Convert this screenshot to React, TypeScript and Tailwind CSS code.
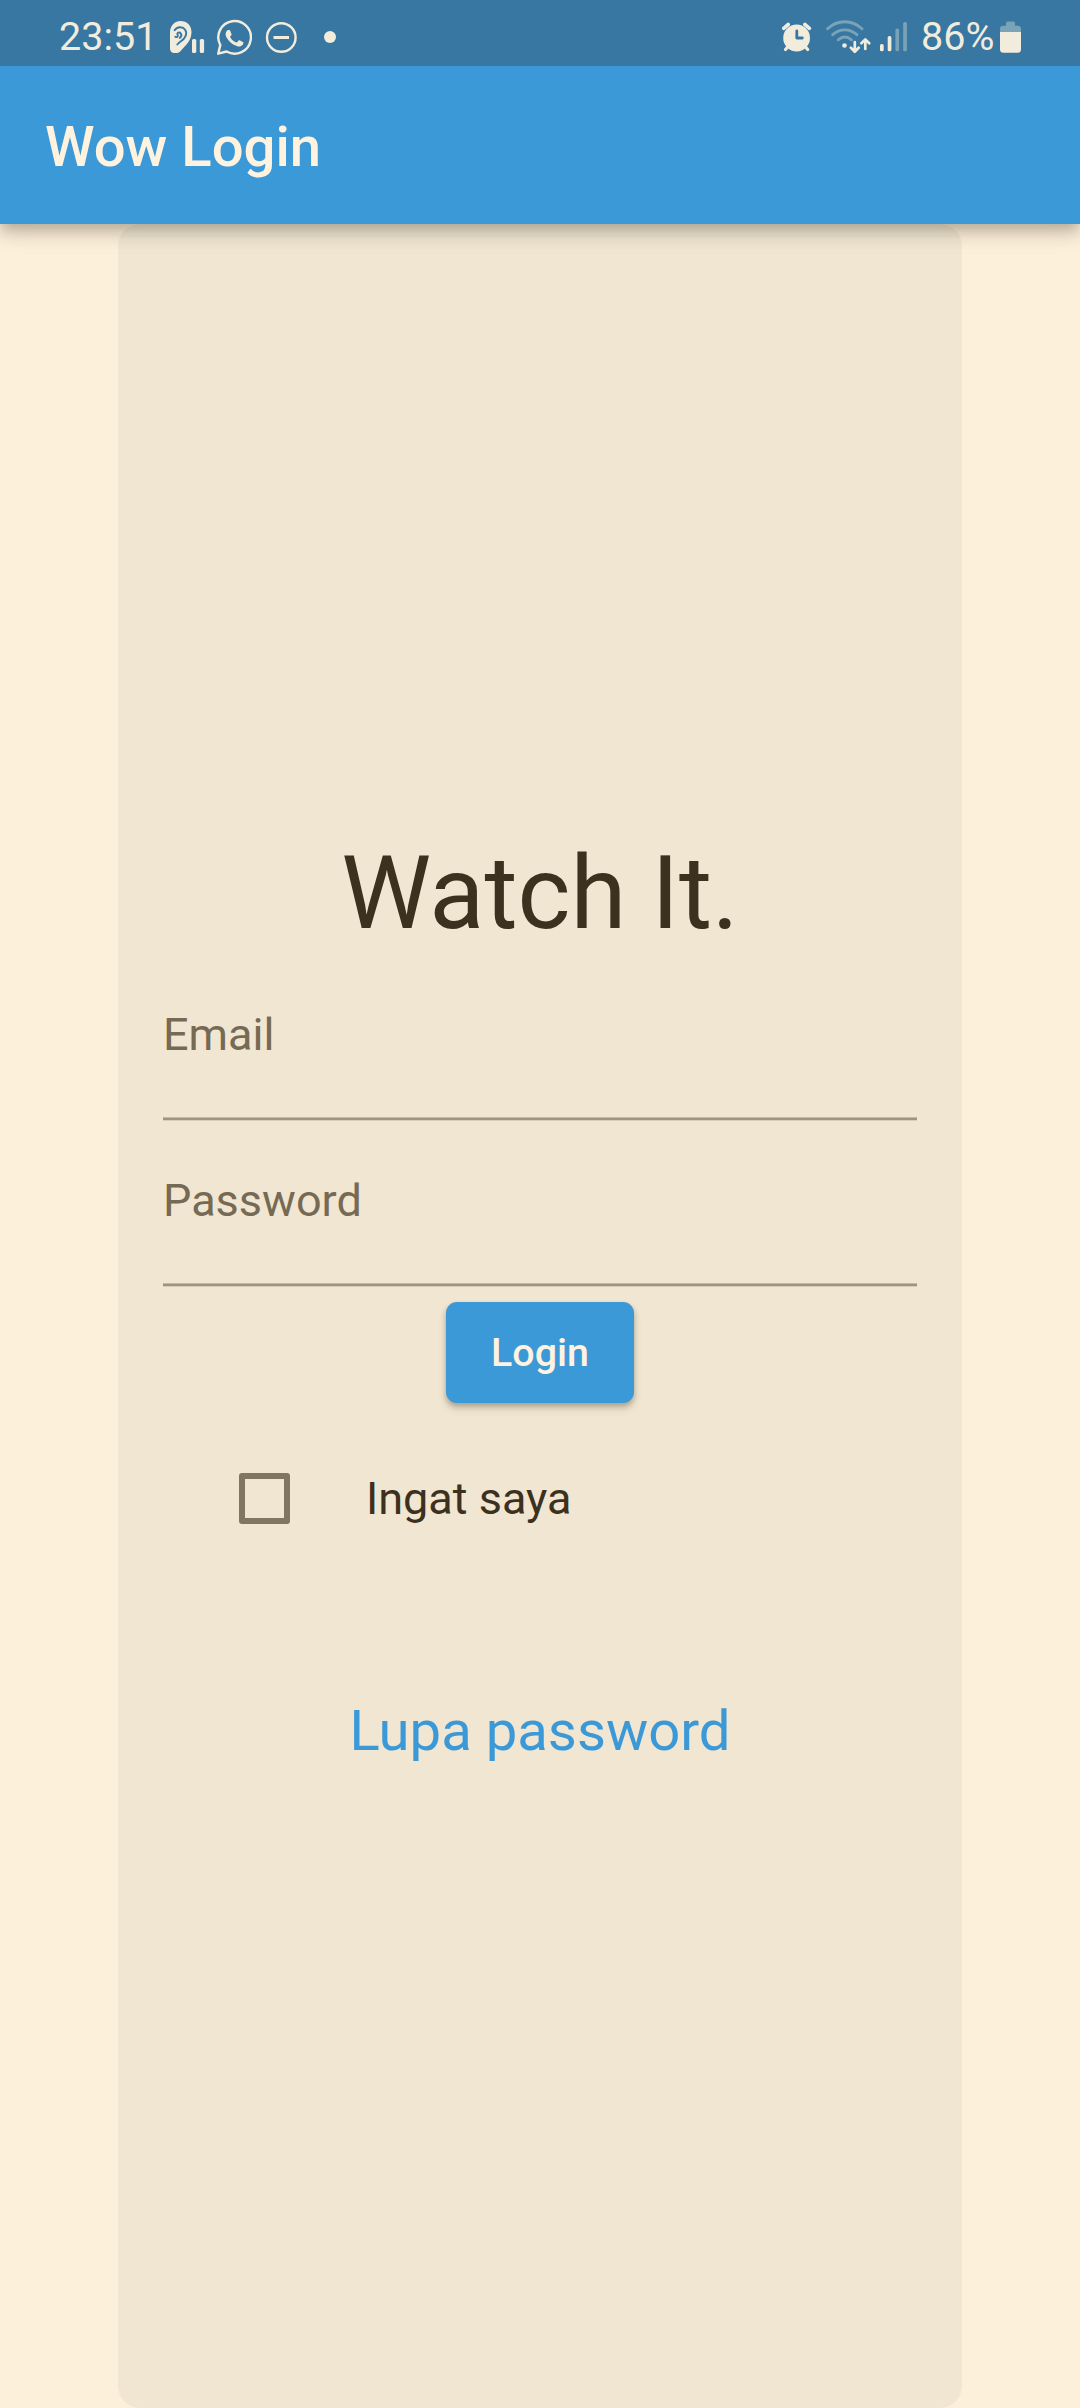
import React from "react";

function EarIcon() {
  return (
    <svg className="ml-5 h-[66px] w-9 shrink-0" viewBox="169 0 36 66" fill="none">
      <path d="M170 33c0-7 4-12 10.500-12S191.500 25.500 191.500 32c0 5-1.800 9-5 12.500-2.700 3-4.500 4.800-6 6.700-1.200 1.400-3 1.800-5.500 1.800-3.500 0-5-2-5-5Z" fill="#f2ecdc" />
      <path d="M174.600 30.300c2.500-3.800 8-4.200 10.400-.8 3 4.200-.3 9.500-4.100 11.800-1.500 1-2.600 1.900-3.600 3.200M175.300 36.700c1.600 1 3.300-.2 2.300-1.900-1.100-2 1.800-3.200 3.200-1.200 1.100 1.700.2 3.400-1 4.300" stroke="#3777a2" strokeWidth="1.900" strokeLinecap="round" />
      <rect x="192" y="39" width="4.300" height="14" rx="1.600" fill="#f2ecdc" />
      <rect x="199.800" y="39" width="4.300" height="14" rx="1.600" fill="#f2ecdc" />
    </svg>
  );
}

function WhatsAppIcon() {
  return (
    <svg className="ml-[11px] h-[66px] w-9 shrink-0" viewBox="216 0 36 66" fill="none">
      <path d="M218.200 53.700l2.100-8.600a16.300 16.300 0 1 1 6.300 6.400z" stroke="#f2ecdc" strokeWidth="2.400" strokeLinejoin="round" />
      <path
        transform="translate(216.800 20.600) scale(1.470)"
        d="M17.472 14.382c-.297-.149-1.758-.867-2.030-.967-.273-.099-.471-.148-.670.150-.197.297-.767.966-.940 1.164-.173.199-.347.223-.644.075-.297-.150-1.255-.463-2.390-1.475-.883-.788-1.480-1.761-1.653-2.059-.173-.297-.018-.458.130-.606.134-.133.298-.347.446-.520.149-.174.198-.298.298-.497.099-.198.050-.371-.025-.520-.075-.149-.669-1.612-.916-2.207-.242-.579-.487-.500-.669-.510-.173-.008-.371-.010-.570-.010-.198 0-.520.074-.792.372-.272.297-1.040 1.016-1.040 2.479 0 1.462 1.065 2.875 1.213 3.074.149.198 2.096 3.200 5.077 4.487.709.306 1.262.489 1.694.625.712.227 1.360.195 1.871.118.571-.085 1.758-.719 2.006-1.413.248-.694.248-1.289.173-1.413-.074-.124-.272-.198-.570-.347z"
        fill="#f2ecdc"
      />
    </svg>
  );
}

function DoNotDisturbIcon() {
  return (
    <svg className="ml-[13px] h-[66px] w-8 shrink-0" viewBox="265 0 32 66" fill="none" stroke="#f2ecdc">
      <circle cx="281.300" cy="37.500" r="14.300" strokeWidth="2.400" />
      <path d="M273.500 37.500h15.500" strokeWidth="3" />
    </svg>
  );
}

function AlarmIcon() {
  return (
    <svg className="h-[66px] w-[30px] shrink-0" viewBox="782 0 30 66" fill="none">
      <circle cx="796.600" cy="38" r="13.400" fill="#f2ecdc" />
      <path d="M783.700 28.300l4.500-3.800M809.400 28.300l-4.500-3.800" stroke="#f2ecdc" strokeWidth="3.600" strokeLinecap="round" />
      <path d="M788.500 46l-3 3.500M804.700 46l3 3.500" stroke="#f2ecdc" strokeWidth="3.200" strokeLinecap="round" />
      <path d="M796.800 31v7h5.500" stroke="#3777a2" strokeWidth="2.800" strokeLinecap="round" strokeLinejoin="round" />
    </svg>
  );
}

function WifiIcon() {
  return (
    <svg className="ml-[13px] h-[66px] w-[46px] shrink-0" viewBox="825 0 46 66" fill="none" strokeLinecap="round">
      <path d="M827.500 28.800c10-9.400 24.500-9.400 34.500 0M832.700 34.700c7.200-6.500 17-6.500 24.200 0M838.200 39.800c4.300-3.600 9.100-3.600 13.300 0" stroke="#7ba3b7" strokeWidth="2.900" />
      <circle cx="844.500" cy="45.500" r="2.300" fill="#f2ecdc" />
      <path d="M854.800 42v9.500M850.900 47.800l3.900 3.900 3.900-3.900M865.300 49v-9.500M861.400 43.300l3.900-3.900 3.900 3.900" stroke="#f2ecdc" strokeWidth="2.700" strokeLinejoin="round" />
    </svg>
  );
}

function SignalIcon() {
  return (
    <svg className="ml-[9px] h-[66px] w-7 shrink-0" viewBox="880 0 28 66">
      <rect x="880" y="44" width="3.700" height="7.300" rx="1.600" fill="#f2ecdc" />
      <rect x="887.700" y="36" width="3.700" height="15.300" rx="1.600" fill="#f2ecdc" />
      <rect x="895.400" y="28.500" width="3.700" height="22.800" rx="1.600" fill="#7ba3b7" />
      <rect x="903.200" y="22" width="3.700" height="29.300" rx="1.600" fill="#7ba3b7" />
    </svg>
  );
}

function BatteryIcon() {
  return (
    <svg className="h-[66px] w-[21px] shrink-0" viewBox="1000 0 21 66">
      <path d="M1000 32v-3q0-3.300 3.300-3.300h2.700v-2.700q0-1.500 1.500-1.500h6q1.500 0 1.500 1.500v2.700h2.700q3.300 0 3.300 3.300v3z" fill="#7ba3b7" />
      <path d="M1000 32h21v17.300q0 3.500-3.500 3.500h-14q-3.500 0-3.500-3.500z" fill="#f2ecdc" />
    </svg>
  );
}

function StatusBar() {
  return (
    <div className="flex h-[66px] w-full items-center bg-[#3777a2] text-[39.500px] leading-[66px] text-[#f2ecdc]">
      <span className="ml-[59px] w-[91px] shrink-0 pt-[8px] whitespace-nowrap">23:51</span>
      <span className="-ml-[1px] flex items-center">
        <EarIcon />
        <WhatsAppIcon />
        <DoNotDisturbIcon />
      </span>
      <span className="mt-2 ml-[27px] size-3 rounded-full bg-[#f2ecdc]" />
      <span className="ml-auto flex items-center pr-[59px]">
        <AlarmIcon />
        <WifiIcon />
        <SignalIcon />
        <span className="ml-[13px] w-[79px] pt-[8px] whitespace-nowrap">86%</span>
        <BatteryIcon />
      </span>
    </div>
  );
}

function Field({ label, type }: { label: string; type: string }) {
  return (
    <label className="flex h-[166px] flex-col">
      <span className="flex h-[162px] items-start pt-[50px] text-[45px] leading-[60px] text-[#766a54]">
        {label}
        <input type={type} className="w-0 min-w-0 flex-1 bg-transparent outline-none" />
      </span>
      <span className="h-1 border-t border-b border-t-[#c5b9a3] border-b-[#d8cdb8] bg-[#a09480]" />
    </label>
  );
}

export default function App() {
  return (
    <div className="flex h-[2408px] w-[1080px] flex-col overflow-hidden bg-[#fcf0db] font-[Roboto,sans-serif]">
      <header className="relative z-10 bg-[#3c99d7] shadow-[0_6px_11px_-3px_rgba(60,48,30,0.2),0_11px_14px_rgba(60,48,30,0.14),0_3px_28px_rgba(60,48,30,0.12)]">
        <StatusBar />
        <h1 className="flex h-[158px] items-center pt-[4px] pl-[45px] text-[56.250px] font-medium text-[#fff3e0]">Wow Login</h1>
      </header>
      <main className="mx-[118px] flex flex-1 flex-col rounded-[22px] bg-[#f0e6d2] px-[45px] pt-[608px]">
        <h2 className="h-[123px] text-center text-[101.250px] leading-[123px] text-[#3c301e]">Watch It.</h2>
        <Field label="Email" type="email" />
        <Field label="Password" type="password" />
        <button className="mt-[15px] h-[101px] w-[188px] self-center rounded-[11px] bg-[#3c99d7] text-[39.375px] font-medium text-[#fff3e0] shadow-[0_3px_5px_rgba(60,48,30,0.28),0_6px_8px_rgba(60,48,30,0.14)]">
          Login
        </button>
        <div className="mt-[69px] flex h-[52px] items-center pl-[76px]">
          <span className="size-[51px] rounded-[3px] border-[6px] border-[#817661]" />
          <span className="ml-[76px] pt-[2px] text-[45px] leading-[52px] text-[#3c301e]">Ingat saya</span>
        </div>
        <a className="mt-[174px] text-center text-[56.250px] leading-[66px] text-[#3c99d7]">Lupa password</a>
      </main>
    </div>
  );
}
